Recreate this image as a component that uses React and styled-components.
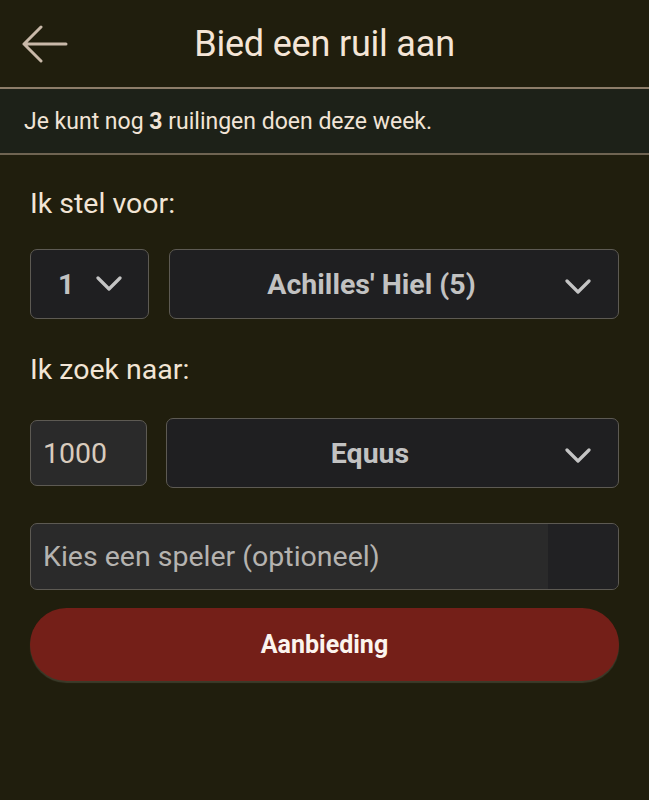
import React from 'react';
import styled, { createGlobalStyle } from 'styled-components';

const GlobalStyle = createGlobalStyle`
  html, body {
    margin: 0;
    padding: 0;
    background: #201e0d;
  }
  body {
    font-family: Roboto, 'Noto Sans', sans-serif;
    -webkit-font-smoothing: antialiased;
  }
`;

const Page = styled.div`
  min-height: 800px;
  background: #201e0d;
`;

const Header = styled.header`
  display: grid;
  grid-template-columns: 88px 1fr 88px;
  align-items: center;
  height: 87px;
  border-bottom: 2px solid #8d7d69;
`;

const BackButton = styled.button`
  display: flex;
  align-items: center;
  justify-content: center;
  width: 88px;
  height: 87px;
  padding: 4px 0 0 2px;
  border: 0;
  background: none;
  color: #c9b9a9;
  cursor: pointer;
`;

const Title = styled.h1`
  margin: 0;
  text-align: center;
  font-size: 36px;
  font-weight: 400;
  color: #f4e5d6;
  letter-spacing: -0.2px;
`;

const Banner = styled.div`
  display: flex;
  align-items: center;
  height: 64px;
  padding: 0 24px;
  background: #1d2118;
  border-bottom: 2px solid #6f6452;
  font-size: 23px;
  color: #f1e4d6;

  b {
    font-weight: 700;
  }
`;

const Form = styled.div`
  padding: 0 30px;
`;

const Label = styled.div`
  margin-top: ${({ $top }) => $top}px;
  font-size: 28.5px;
  line-height: 32px;
  color: #f2e5d5;
`;

const Row = styled.div`
  display: grid;
  grid-template-columns: ${({ $first }) => $first}px 1fr;
  column-gap: ${({ $gap }) => $gap}px;
  align-items: center;
  margin-top: ${({ $top }) => $top}px;
`;

const Select = styled.div`
  position: relative;
  display: flex;
  align-items: center;
  justify-content: ${({ $center }) => ($center ? 'center' : 'flex-start')};
  box-sizing: border-box;
  height: 70px;
  padding: ${({ $center }) => ($center ? '0 45px 0 0' : '0 0 0 27px')};
  gap: 22px;
  background: #1f1f21;
  border: 1.5px solid #5d5a53;
  border-radius: 7px;
  font-size: 28.5px;
  font-weight: 700;
  color: #c2c2c2;
`;

const Chevron = styled.svg`
  flex: none;
  ${({ $end }) => ($end ? 'position: absolute; right: 27px; top: 29px;' : '')}
`;

const NumberField = styled.div`
  display: flex;
  align-items: center;
  box-sizing: border-box;
  height: 66px;
  padding-left: 12px;
  background: #2a2a2a;
  border: 1.5px solid #5d5a53;
  border-radius: 7px;
  font-size: 28.5px;
  color: #d9cbbd;
`;

const PlayerField = styled.div`
  display: grid;
  grid-template-columns: 1fr 70px;
  box-sizing: border-box;
  height: 67px;
  margin-top: 35px;
  background: #2a2a2a;
  border: 1.5px solid #5d5a53;
  border-radius: 7px;
  overflow: hidden;
`;

const Placeholder = styled.div`
  display: flex;
  align-items: center;
  padding-left: 12px;
  font-size: 28.5px;
  color: #b5b3b0;
`;

const PlayerToggle = styled.div`
  background: #212123;
`;

const SubmitButton = styled.button`
  display: block;
  width: 100%;
  height: 73px;
  margin-top: 18px;
  border: 0;
  border-radius: 37px;
  background: #741f18;
  box-shadow: 0 2px 1px #3c3b2a;
  font-family: Roboto, 'Noto Sans', sans-serif;
  font-size: 25px;
  font-weight: 700;
  color: #fbf4ee;
  cursor: pointer;
`;

const ChevronIcon = ({ end }) => (
  <Chevron $end={end} width="26" height="16" viewBox="0 0 26 16">
    <polyline
      points="2,2 13,13 24,2"
      fill="none"
      stroke="#c4c4c4"
      strokeWidth="3.2"
      strokeLinecap="round"
      strokeLinejoin="round"
    />
  </Chevron>
);

const App = () => (
  <Page>
    <GlobalStyle />
    <Header>
      <BackButton aria-label="Terug">
        <svg width="48" height="42" viewBox="0 0 48 42">
          <path
            d="M45 19 H3 M20 2 L3 19 L20 36"
            fill="none"
            stroke="currentColor"
            strokeWidth="3"
            strokeLinecap="round"
            strokeLinejoin="round"
          />
        </svg>
      </BackButton>
      <Title>Bied een ruil aan</Title>
      <div />
    </Header>

    <Banner>
      <span>
        Je kunt nog <b>3</b> ruilingen doen deze week.
      </span>
    </Banner>

    <Form>
      <Label $top={33}>Ik stel voor:</Label>
      <Row $first={119} $gap={20} $top={29}>
        <Select>
          1
          <ChevronIcon />
        </Select>
        <Select $center>
          Achilles' Hiel (5)
          <ChevronIcon end />
        </Select>
      </Row>

      <Label $top={35}>Ik zoek naar:</Label>
      <Row $first={117} $gap={19} $top={32}>
        <NumberField>1000</NumberField>
        <Select $center>
          Equus
          <ChevronIcon end />
        </Select>
      </Row>

      <PlayerField>
        <Placeholder>Kies een speler (optioneel)</Placeholder>
        <PlayerToggle />
      </PlayerField>

      <SubmitButton>Aanbieding</SubmitButton>
    </Form>
  </Page>
);

export default App;
